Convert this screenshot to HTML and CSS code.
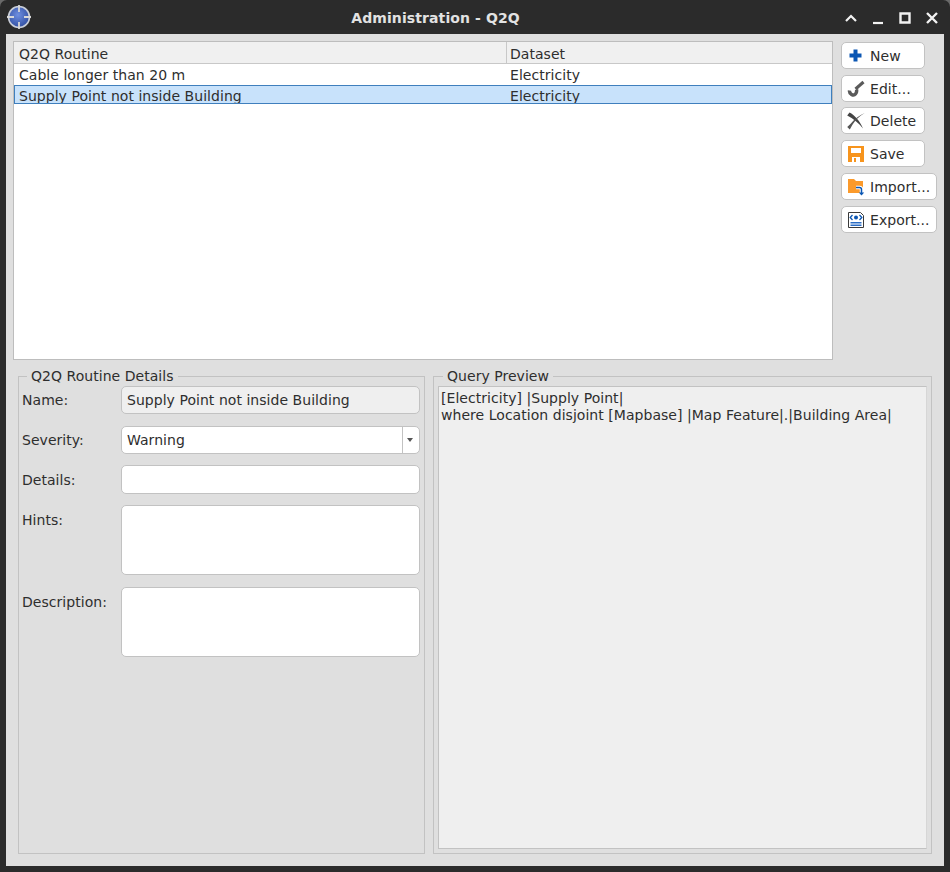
FILE: index.html
```html
<!DOCTYPE html>
<html lang="en">

	<head>
		<meta charset="UTF-8">
		<meta name="viewport" content="width=device-width, initial-scale=1.0">
		<title>Administration - Q2Q</title>
		<link rel="stylesheet" href="styles.css">
	</head>

	<body>
		<div class="window">
			<div class="title-bar">
				<svg class="app-icon" width="26" height="26" viewBox="0 0 26 26">
					<defs>
						<radialGradient id="globe" cx="0.45" cy="0.4" r="0.65">
							<stop offset="0" stop-color="#6f8fe0" />
							<stop offset="1" stop-color="#2c4a9e" />
						</radialGradient>
					</defs>
					<circle cx="13" cy="13" r="10.5" fill="url(#globe)" stroke="#c9ced8" stroke-width="1.6" />
					<path d="M13 1v7M13 18v7M1 13h7M18 13h7" stroke="#d8d8d8" stroke-width="1.8" fill="none" />
				</svg>
				<div class="title">Administration - Q2Q</div>
				<div class="win-buttons">
					<svg width="14" height="14" viewBox="0 0 14 14"><path d="M2 10l5-5 5 5" stroke="#f2f2f2" stroke-width="2.2" fill="none" /></svg>
					<svg width="14" height="14" viewBox="0 0 14 14"><path d="M2 12h10" stroke="#f2f2f2" stroke-width="2.2" fill="none" /></svg>
					<svg width="14" height="14" viewBox="0 0 14 14"><path d="M2.5 2.5h9v9h-9z" stroke="#f2f2f2" stroke-width="2.4" fill="none" /></svg>
					<svg width="14" height="14" viewBox="0 0 14 14"><path d="M2 2l10 10M12 2l-10 10" stroke="#f2f2f2" stroke-width="2.4" fill="none" /></svg>
				</div>
			</div>

			<div class="content">
				<div class="top">
					<div class="table">
						<div class="row head">
							<div class="cell name-col">Q2Q Routine</div>
							<div class="cell">Dataset</div>
						</div>
						<div class="row">
							<div class="cell name-col">Cable longer than 20 m</div>
							<div class="cell">Electricity</div>
						</div>
						<div class="row selected">
							<div class="cell name-col">Supply Point not inside Building</div>
							<div class="cell">Electricity</div>
						</div>
					</div>

					<div class="actions">
						<div class="btn">
							<svg width="18" height="18" viewBox="0 0 18 18"><path d="M6.500 2.500h4v4h4v4h-4v4h-4v-4h-4v-4h4z" fill="#0b56b3" /></svg>
							<span>New</span>
						</div>
						<div class="btn">
							<svg width="18" height="18" viewBox="0 0 18 18"><path d="M16.500 2l-8 7" stroke="#5a5a5a" stroke-width="3" fill="none" /><path d="M2.500 10.500c-.5 3.500 4 6 6 3.500 1.200-1.500 1.400-3 1-4.500" stroke="#5a5a5a" stroke-width="3.400" fill="none" /></svg>
							<span>Edit...</span>
						</div>
						<div class="btn">
							<svg width="18" height="18" viewBox="0 0 18 18"><path d="M.2 3.500l2.300-3c5 2.500 10.500 8.500 13.500 16-4-5-9-9.500-15.800-13z" fill="#444" /><path d="M17.800 1c-5.500 3-10 7.500-12.500 12l-2.500 4.500-2.600-2.600 3.200-3c4-4.500 9-8.700 14.400-10.900z" fill="#555" /></svg>
							<span>Delete</span>
						</div>
						<div class="btn">
							<svg width="18" height="18" viewBox="0 0 18 18"><path d="M1 1h16v16h-16z" fill="#f7941d" /><path d="M4 3h10v5h-10z" fill="#fff" /><path d="M5 12h8v5h-8z" fill="#fff" /><path d="M7 13h2v4h-2z" fill="#f7941d" /></svg>
							<span>Save</span>
						</div>
						<div class="btn wide">
							<svg width="18" height="18" viewBox="0 0 18 18"><path d="M1 1h6l2 2h7v12h-15z" fill="#fb9a2b" /><path d="M9 9.500h3.500q2 0 2 2v4" stroke="#fff" stroke-width="3.500" fill="none" /><path d="M9 9.500h3.500q2 0 2 2v4" stroke="#0b56b3" stroke-width="1.500" fill="none" /><path d="M11.800 14.500l2.700 3 2.700-3z" fill="#0b56b3" /></svg>
							<span>Import...</span>
						</div>
						<div class="btn wide">
							<svg width="18" height="18" viewBox="0 0 18 18"><path d="M1.500 1.500h12l3 3v12h-15z" fill="#fff" stroke="#3a3a3a" /><path d="M3.500 11.500h11M3.500 13h11M3.500 14.500h11" stroke="#2a6cc4" /><circle cx="9" cy="6.500" r="2" fill="#0b56b3" /><path d="M5.500 4l-2.300 2.500 2.300 2.500M12.500 4l2.300 2.500-2.300 2.500" stroke="#0b56b3" stroke-width="1.300" fill="none" /></svg>
							<span>Export...</span>
						</div>
					</div>
				</div>

				<div class="bottom">
					<fieldset class="group details">
						<legend>Q2Q Routine Details</legend>
						<div class="form">
							<label class="label-short">Name:</label>
							<div class="field readonly h-28">Supply Point not inside Building</div>

							<label class="label-short">Severity:</label>
							<div class="field combo h-28">
								<span class="combo-value">Warning</span>
								<span class="combo-arrow"></span>
							</div>

							<label>Details:</label>
							<div class="field h-29"></div>

							<label>Hints:</label>
							<div class="field h-70"></div>

							<label>Description:</label>
							<div class="field h-70"></div>
						</div>
					</fieldset>

					<fieldset class="group preview">
						<legend>Query Preview</legend>
						<div class="query">[Electricity] |Supply Point|<br>where Location disjoint [Mapbase] |Map Feature|.|Building Area|</div>
					</fieldset>
				</div>
			</div>
		</div>
	</body>

</html>
```

FILE: styles.css
```css
html,
body {
	margin: 0;
	height: 100%;
	background: #6a6a6a;
}

.window {
	width: 950px;
	height: 872px;
	box-sizing: border-box;
	display: flex;
	flex-direction: column;
	background: #2b2b2b;
	border-radius: 7px 7px 0 0;
	padding: 0 6px 6px;
	font: 14px/17px "DejaVu Sans", sans-serif;
	letter-spacing: 0.04px;
	color: #2e2e2e;
}

.title-bar {
	height: 34px;
	flex: none;
	display: flex;
	align-items: center;
}

.app-icon {
	flex: none;
}

.title {
	flex: 1;
	text-align: center;
	color: #e2e2e2;
	font-weight: bold;
	font-size: 14px;
	letter-spacing: 0.1px;
	padding: 3px 5px 0 0;
}

.win-buttons {
	display: flex;
	align-items: center;
	gap: 13px;
	padding: 2px 5px 0 0;
}

.content {
	flex: 1;
	background: #dfdfdf;
	display: flex;
	flex-direction: column;
	padding: 7px 7px 12px;
	min-height: 0;
}

.top {
	display: flex;
	gap: 8px;
	height: 319px;
	flex: none;
}

.table {
	width: 820px;
	box-sizing: border-box;
	background: #fff;
	border: 1px solid #bdbdbd;
}

.row {
	display: flex;
	height: 20px;
	line-height: 20px;
	box-sizing: border-box;
	padding-top: 1px;
}

.row.head {
	height: 22px;
	background: #f0f0f0;
	border-bottom: 1px solid #c8c8c8;
	padding-top: 2px;
}

.row.head .name-col {
	border-right: 1px solid #c8c8c8;
	margin-top: -2px;
	padding-top: 2px;
}

.row.selected {
	height: 19px;
	margin-top: 1px;
	background: #c8e2fb;
	outline: 1px solid #3f7fbd;
	outline-offset: -1px;
}

.cell {
	padding-left: 3px;
	white-space: nowrap;
}

.name-col {
	width: 493px;
	box-sizing: border-box;
	padding-left: 5px;
	flex: none;
}

.actions {
	width: 96px;
	display: flex;
	flex-direction: column;
	align-items: flex-start;
	gap: 6px;
	padding-top: 1px;
}

.btn {
	width: 84px;
	height: 27px;
	box-sizing: border-box;
	background: #fff;
	border: 1px solid #c2c2c2;
	border-radius: 5px;
	display: flex;
	align-items: center;
	padding-left: 5px;
}

.btn:nth-child(3) {
	margin-top: -1px;
}

.btn.wide {
	width: 96px;
}

.btn svg {
	flex: none;
	margin-right: 5px;
}

.btn span {
	padding-top: 1px;
}

.bottom {
	flex: 1;
	display: grid;
	grid-template-columns: 407px 499px;
	gap: 8px;
	padding: 8px 5px 0;
	min-height: 0;
}

.group {
	margin: 0;
	min-width: 0;
	border: 1px solid #c2c2c2;
	padding: 0;
}

.group legend {
	margin-left: 5px;
	padding: 0 4px;
	line-height: 17px;
}

.details {
	padding: 1px 4px 0 3px;
}

.form {
	display: grid;
	grid-template-columns: 99px 1fr;
	grid-template-rows: 29px 28px 29px 71px 70px;
	row-gap: 11px;
	align-items: start;
}

.form label {
	padding-top: 7px;
}

.form .label-short {
	padding-top: 6px;
}

.field {
	box-sizing: border-box;
	background: #fff;
	border: 1px solid #c2c2c2;
	border-radius: 5px;
	padding: 5px 5px 0;
	line-height: 17px;
}

.field.readonly {
	background: #efefef;
}

.h-28 {
	height: 28px;
}

.h-29 {
	height: 29px;
}

.h-70 {
	height: 70px;
}

.combo {
	display: flex;
	padding: 0;
	align-items: center;
}

.combo-value {
	flex: 1;
	padding: 1px 0 0 5px;
}

.combo-arrow {
	width: 16px;
	height: 100%;
	border-left: 1px solid #c2c2c2;
	position: relative;
}

.combo-arrow::after {
	content: "";
	position: absolute;
	left: 4px;
	top: 11px;
	border-left: 3.5px solid transparent;
	border-right: 3.5px solid transparent;
	border-top: 4px solid #555;
}

.preview {
	padding: 1px 4px 4px;
	display: flex;
	flex-direction: column;
}

.query {
	flex: 1;
	height: 464px;
	box-sizing: border-box;
	background: #efefef;
	border-top: 1px solid #c2c2c2;
	border-left: 1px solid #c2c2c2;
	border-right: 1px solid #d6d6d6;
	border-bottom: 1px solid #c2c2c2;
	padding: 3px 2px;
	white-space: nowrap;
}
```
